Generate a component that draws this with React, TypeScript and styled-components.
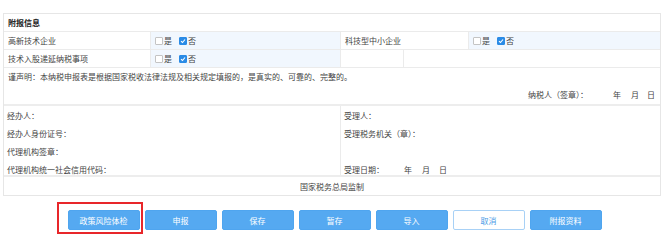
import styled, { createGlobalStyle } from "styled-components";

const GlobalStyle = createGlobalStyle`
  html, body {
    margin: 0;
    padding: 0;
    background: #fff;
  }
  body {
    font-family: "Noto Sans CJK SC", "Noto Sans", sans-serif;
    font-size: 8px;
    color: #333;
  }
`;

const Page = styled.div`
  width: 665px;
  height: 242px;
  padding: 13px 0 0 3px;
  box-sizing: border-box;
  overflow: hidden;
`;

const Sheet = styled.div`
  width: 658px;
  border: 1px solid #e6e6e6;
  box-sizing: border-box;
`;

const Row = styled.div<{ $h?: number }>`
  display: flex;
  height: ${(p) => p.$h ?? 18}px;
  border-bottom: 1px solid #ebebeb;
  box-sizing: border-box;
`;

const Cell = styled.div<{ $w?: number; $tint?: boolean; $bold?: boolean }>`
  ${(p) => (p.$w ? `width: ${p.$w}px;` : "flex: 1;")}
  display: flex;
  align-items: center;
  gap: 4px;
  padding-left: 4px;
  box-sizing: border-box;
  background: ${(p) => (p.$tint ? "#f1f7fe" : "#fff")};
  border-right: 1px solid #ebebeb;
  font-weight: ${(p) => (p.$bold ? 700 : 400)};
  color: ${(p) => (p.$bold ? "#222" : "#444")};
  white-space: nowrap;
  &:last-child {
    border-right: none;
  }
`;

const Option = styled.span`
  display: inline-flex;
  align-items: center;
  gap: 1px;
  margin-right: 3px;
`;

const Box = styled.span<{ $on?: boolean }>`
  width: 8px;
  height: 8px;
  box-sizing: border-box;
  border-radius: 1px;
  border: 1px solid ${(p) => (p.$on ? "#2a8be6" : "#c4c4c4")};
  background: ${(p) => (p.$on ? "#2a8be6" : "#fff")};
  display: inline-flex;
  align-items: center;
  justify-content: center;
`;

function Check({ on }: { on?: boolean }) {
  return (
    <Box $on={on}>
      {on && (
        <svg width="6" height="6" viewBox="0 0 6 6">
          <path d="M1 3.1 L2.5 4.5 L5 1.5" fill="none" stroke="#fff" strokeWidth="1.1" />
        </svg>
      )}
    </Box>
  );
}

function YesNo() {
  return (
    <>
      <Option>
        <Check />是
      </Option>
      <Option>
        <Check on />否
      </Option>
    </>
  );
}

const Declaration = styled.div`
  height: 38px;
  border-bottom: 2px solid #ededed;
  padding: 3px 4px 0 4px;
  box-sizing: border-box;
  display: flex;
  flex-direction: column;
  justify-content: space-between;
  color: #444;
`;

const SignLine = styled.div`
  display: flex;
  justify-content: flex-end;
  padding-bottom: 4px;
  padding-right: 1px;
`;

const Gap = styled.span<{ $w: number }>`
  display: inline-block;
  width: ${(p) => p.$w}px;
`;

const Signatures = styled.div`
  display: flex;
  height: 71px;
  border-bottom: 2px solid #ededed;
  box-sizing: border-box;
`;

const SigCol = styled.div<{ $w?: number }>`
  ${(p) => (p.$w ? `width: ${p.$w}px;` : "flex: 1;")}
  display: grid;
  grid-template-rows: repeat(4, 18px);
  align-items: center;
  padding: 0 3px;
  box-sizing: border-box;
  border-right: 1px solid #ebebeb;
  color: #444;
  &:last-child {
    border-right: none;
  }
`;

const Footer = styled.div`
  height: 18px;
  display: flex;
  align-items: center;
  justify-content: center;
  color: #444;
`;

const Actions = styled.div`
  position: relative;
  display: flex;
  justify-content: center;
  gap: 5px;
  width: 658px;
  margin-top: 14px;
  padding-left: 5px;
  box-sizing: border-box;
`;

const Btn = styled.button<{ $plain?: boolean }>`
  width: 72px;
  height: 20px;
  padding: 0;
  border-radius: 2px;
  font-family: inherit;
  font-size: 8px;
  border: 1px solid ${(p) => (p.$plain ? "#a8d1f6" : "#4fa5ef")};
  background: ${(p) => (p.$plain ? "#fff" : "#55a9f1")};
  color: ${(p) => (p.$plain ? "#4a9ce6" : "#fff")};
  cursor: pointer;
`;

const Highlight = styled.div`
  position: absolute;
  left: 54px;
  top: -8px;
  width: 86px;
  height: 32px;
  border: 2px solid #e8262a;
  box-sizing: border-box;
  pointer-events: none;
`;

const BUTTONS = ["政策风险体检", "申报", "保存", "暂存", "导入", "取消", "附报资料"];

export default function App() {
  return (
    <>
      <GlobalStyle />
      <Page>
        <Sheet>
          <Row>
            <Cell $bold>附报信息</Cell>
          </Row>
          <Row>
            <Cell $w={147}>高新技术企业</Cell>
            <Cell $w={190} $tint>
              <YesNo />
            </Cell>
            <Cell $w={128}>科技型中小企业</Cell>
            <Cell $tint>
              <YesNo />
            </Cell>
          </Row>
          <Row>
            <Cell $w={147}>技术入股递延纳税事项</Cell>
            <Cell $w={190} $tint>
              <YesNo />
            </Cell>
            <Cell $w={63} />
            <Cell />
          </Row>
          <Declaration>
            <div>谨声明：本纳税申报表是根据国家税收法律法规及相关规定填报的，是真实的、可靠的、完整的。</div>
            <SignLine>
              纳税人（签章）：<Gap $w={25} />年<Gap $w={10} />月<Gap $w={8} />日
            </SignLine>
          </Declaration>
          <Signatures>
            <SigCol $w={337}>
              <span>经办人：</span>
              <span>经办人身份证号：</span>
              <span>代理机构签章：</span>
              <span>代理机构统一社会信用代码：</span>
            </SigCol>
            <SigCol>
              <span>受理人：</span>
              <span>受理税务机关（章）：</span>
              <span />
              <span>
                受理日期：<Gap $w={20} />年<Gap $w={10} />月<Gap $w={9} />日
              </span>
            </SigCol>
          </Signatures>
          <Footer>国家税务总局监制</Footer>
        </Sheet>
        <Actions>
          {BUTTONS.map((b) => (
            <Btn key={b} $plain={b === "取消"}>
              {b}
            </Btn>
          ))}
          <Highlight />
        </Actions>
      </Page>
    </>
  );
}
